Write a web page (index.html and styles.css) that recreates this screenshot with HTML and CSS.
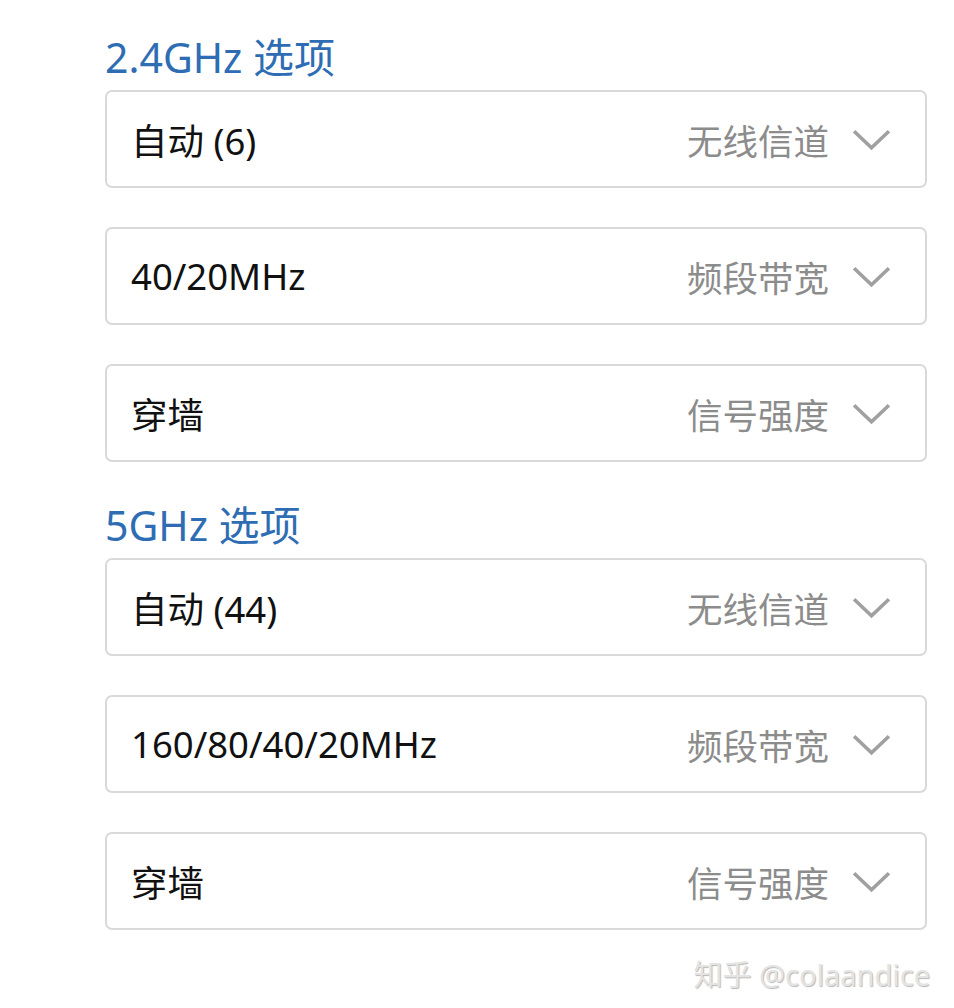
FILE: index.html
```html
<!DOCTYPE html>
<html lang="zh-CN">
<head>
    <meta charset="UTF-8">
    <meta name="viewport" content="width=device-width, initial-scale=1.0">
    <title>无线设置</title>
    <link rel="stylesheet" href="styles.css">
</head>
<body>
    <div class="container">
        <section class="band">
            <h2 class="band-title">2.4GHz 选项</h2>
            <div class="select-row">
                <span class="value">自动 (6)</span>
                <span class="label">无线信道</span>
                <svg class="chevron" viewBox="0 0 40 22"><path d="M3 3 L20 19 L37 3"/></svg>
            </div>
            <div class="select-row">
                <span class="value">40/20MHz</span>
                <span class="label">频段带宽</span>
                <svg class="chevron" viewBox="0 0 40 22"><path d="M3 3 L20 19 L37 3"/></svg>
            </div>
            <div class="select-row">
                <span class="value">穿墙</span>
                <span class="label">信号强度</span>
                <svg class="chevron" viewBox="0 0 40 22"><path d="M3 3 L20 19 L37 3"/></svg>
            </div>
        </section>

        <section class="band">
            <h2 class="band-title">5GHz 选项</h2>
            <div class="select-row">
                <span class="value">自动 (44)</span>
                <span class="label">无线信道</span>
                <svg class="chevron" viewBox="0 0 40 22"><path d="M3 3 L20 19 L37 3"/></svg>
            </div>
            <div class="select-row">
                <span class="value">160/80/40/20MHz</span>
                <span class="label">频段带宽</span>
                <svg class="chevron" viewBox="0 0 40 22"><path d="M3 3 L20 19 L37 3"/></svg>
            </div>
            <div class="select-row">
                <span class="value">穿墙</span>
                <span class="label">信号强度</span>
                <svg class="chevron" viewBox="0 0 40 22"><path d="M3 3 L20 19 L37 3"/></svg>
            </div>
        </section>
    </div>

    <div class="watermark">知乎 @colaandice</div>
</body>
</html>
```

FILE: styles.css
```css
body {
    margin: 0;
    background-color: #ffffff;
    font-family: "Noto Sans", "Noto Sans CJK SC", sans-serif;
}

.container {
    width: 822px;
    margin-left: 105px;
    padding-top: 33px;
}

.band + .band {
    margin-top: 39px;
}

.band-title {
    margin: 0 0 9px 0;
    height: 48px;
    font-size: 41px;
    line-height: 48px;
    font-weight: normal;
    color: #2e6db4;
}

.select-row {
    box-sizing: border-box;
    height: 98px;
    display: flex;
    align-items: center;
    padding: 0 33px 0 24px;
    border: 2px solid #d9d9d9;
    border-radius: 7px;
}

.select-row + .select-row {
    margin-top: 39px;
}

.value {
    flex: 1;
    font-size: 36.5px;
    color: #111111;
}

.label {
    font-size: 35.5px;
    color: #8c8c8c;
}

.chevron {
    width: 41px;
    height: 23px;
    margin-left: 22px;
    fill: none;
    stroke: #a0a0a0;
    stroke-width: 3.5;
}

.watermark {
    position: absolute;
    right: 24px;
    top: 952px;
    font-size: 29px;
    color: #e4e4e4;
    text-shadow: 1px 1px 1px #b8b8b8;
}
```
